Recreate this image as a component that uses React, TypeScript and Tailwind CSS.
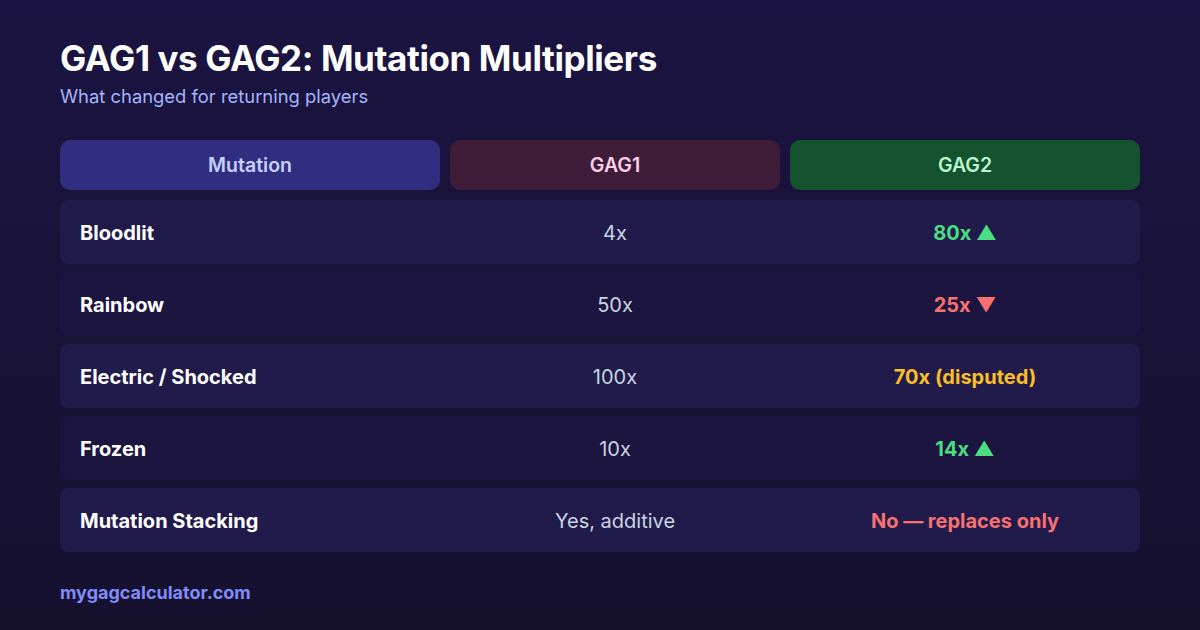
const rows = [
  { name: "Bloodlit", old: "4x", next: "80x ▲", tone: "text-[#4ade80]" },
  { name: "Rainbow", old: "50x", next: "25x ▼", tone: "text-[#f87171]" },
  { name: "Electric / Shocked", old: "100x", next: "70x (disputed)", tone: "text-[#fbbf24]" },
  { name: "Frozen", old: "10x", next: "14x ▲", tone: "text-[#4ade80]" },
  { name: "Mutation Stacking", old: "Yes, additive", next: "No — replaces only", tone: "text-[#f87171]" },
]

export default function App() {
  return (
    <div
      className="w-[1200px] h-[630px] bg-gradient-to-b from-[#1b1442] to-[#16112f] px-[60px] pt-[38px] text-white"
      style={{ fontFamily: "Inter, 'Noto Sans', sans-serif" }}
    >
      <h1 className="text-[35px] leading-[40px] font-bold tracking-[-0.4px]">GAG1 vs GAG2: Mutation Multipliers</h1>
      <p className="text-[18.4px] leading-[24px] text-[#a5b4fc] mt-[6px]">What changed for returning players</p>

      <div className="mt-[32px] grid grid-cols-[380px_330px_350px] gap-[10px] h-[50px] text-[19.5px] font-semibold">
        <div className="rounded-[10px] bg-[#312e81] text-[#c7d2fe] flex items-center justify-center pt-[2px]">Mutation</div>
        <div className="rounded-[10px] bg-[#3f1d38] text-[#fbcfe8] flex items-center justify-center pt-[2px]">GAG1</div>
        <div className="rounded-[10px] bg-[#14532d] text-[#bbf7d0] flex items-center justify-center pt-[2px]">GAG2</div>
      </div>

      <div className="mt-[10px] flex flex-col gap-[8px]">
        {rows.map((r, i) => (
          <div
            key={r.name}
            className={
              "h-[64px] rounded-[8px] grid grid-cols-[380px_330px_350px] gap-[10px] items-center pt-[2px] text-[20px] " +
              (i % 2 === 0 ? "bg-[#211b4c]" : "bg-[#1b1540]")
            }
          >
            <div className="pl-[20px] font-bold">{r.name}</div>
            <div className="text-center text-[#cbd5e1]">{r.old}</div>
            <div className={"text-center font-bold " + r.tone}>{r.next}</div>
          </div>
        ))}
      </div>

      <div className="mt-[29px] text-[18px] leading-[24px] font-bold text-[#818cf8]">mygagcalculator.com</div>
    </div>
  )
}
